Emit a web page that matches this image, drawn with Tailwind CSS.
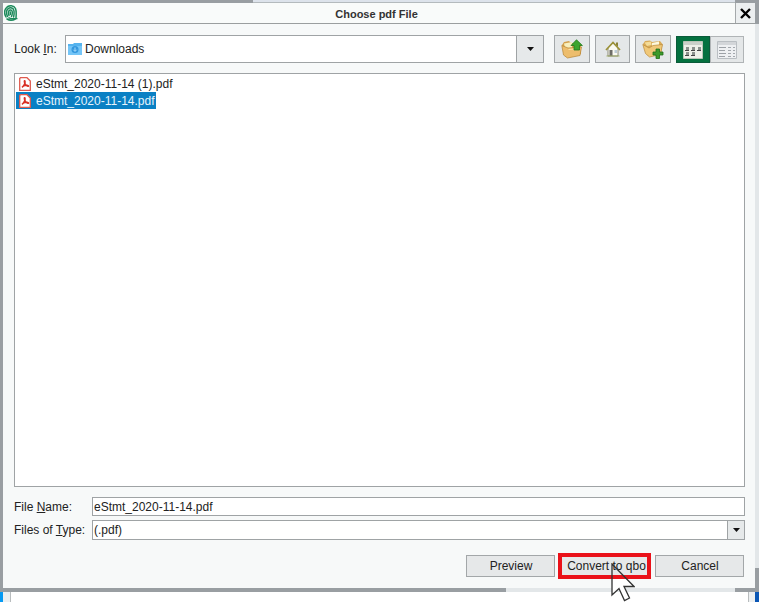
<!DOCTYPE html>
<html lang="en">
<head>
  <meta charset="UTF-8" />
  <meta name="viewport" content="width=device-width, initial-scale=1.0" />
  <title>Choose pdf File</title>
  <script src="https://cdn.jsdelivr.net/npm/@tailwindcss/browser@4"></script>
</head>
<body class="relative flex h-screen flex-col overflow-hidden bg-white font-['Liberation_Sans',Arial,sans-serif] text-xs text-[#222]">

  <!-- Window frame, top edge -->
  <div class="flex h-[3px] shrink-0">
    <div class="w-1/3 bg-[#999ea2]"></div>
    <div class="flex-1 border-b border-[#b4babd] bg-[#dde3eb]"></div>
    <div class="w-6 bg-[#999ea2]"></div>
  </div>

  <div class="flex min-h-0 flex-1">
    <div class="w-[3px] shrink-0 bg-[#999ea2]"></div>

    <div class="flex min-w-0 flex-1 flex-col bg-[#f7f9f9]">
      <!-- Title bar -->
      <header class="flex h-[21px] shrink-0 items-stretch border-b border-[#9a9e9f] bg-[#f9fbfa]">
        <svg class="mt-[2px] ml-px h-4 w-[14px]" viewBox="0 0 14 16" fill="none" stroke="#1c8a5b" stroke-width="1.5" stroke-linecap="round">
          <path d="M2 12C.3 9 .3 5 2.600 2.600C5-.2 10 .2 11.500 3.500C12.500 6 12.300 9 12 12.500" />
          <path d="M3.500 11.500C2 8 2.400 5 4.200 3.600C6.500 2 9.600 3 10 6C10.300 8.500 10 10.500 9.600 12" />
          <path d="M5 10.500C4 8 4.200 5.600 6 5C7.600 4.600 8.400 6 8.300 8C8.200 9.500 8 10.500 7.500 11.500" />
          <path d="M6.300 7V9.500M3 14C5.500 15.600 9 15.300 11.500 14M5 12.800C7 14 9 14 12.800 13.600" />
        </svg>
        <h1 class="flex-1 pt-[3px] text-center text-[11px] leading-4 font-bold text-[#333]">Choose pdf File</h1>
        <button type="button" aria-label="Close" class="flex w-5 items-center justify-center border-l border-[#a5a9ab] bg-[#eceff0]">
          <svg class="h-[11px] w-[11px]" viewBox="0 0 11 11" stroke="#000" stroke-width="2.400"><path d="M1 1L10 10M10 1L1 10" /></svg>
        </button>
      </header>

      <main class="flex min-h-0 flex-1 flex-col pt-[11px] pr-[10px] pb-[9px] pl-[11px]">
        <!-- Look in -->
        <div class="flex shrink-0 items-center pr-px">
          <label for="lookIn" class="w-[51px] shrink-0">Look <u>I</u>n:</label>
          <div class="relative flex-1">
            <select id="lookIn" class="block h-7 w-full appearance-none border border-[#9fa3a5] bg-white pl-[19px] text-xs text-[#222]">
              <option>Downloads</option>
            </select>
            <svg class="pointer-events-none absolute top-2 left-[3px] h-3 w-[14px]" viewBox="0 0 14 12">
              <path d="M0 1H5L6 0H14V12H0Z" fill="#55b3ee" />
              <path d="M0 3H14V12H0Z" fill="#74c5f7" />
              <circle cx="7" cy="6.500" r="3.500" fill="#3397dd" />
              <path d="M7 4.500V8.200M5.300 6.700L7 8.400L8.700 6.700" fill="none" stroke="#a9dcfb" />
            </svg>
            <span class="pointer-events-none absolute top-0 right-0 flex h-7 w-7 items-center justify-center border border-[#9fa3a5] bg-[#e6e9ea]">
              <svg class="h-1 w-[7px]" viewBox="0 0 7 4"><path d="M0 0H7L3.500 4Z" fill="#111" /></svg>
            </span>
          </div>

          <div class="ml-[10px] flex gap-[5px]">
            <button type="button" aria-label="Up one level" class="flex h-7 w-9 items-center justify-center border border-[#a3a7a9] bg-[#e4e7e8]">
              <svg class="h-5 w-[22px]" viewBox="0 0 22 20">
                <path d="M1 6L3 3L8 2L10 4L20 5V15L6 18Z" fill="#d3a04c" />
                <path d="M3 4.500L11 3V9L4 9Z" fill="#f8efbd" />
                <path d="M.8 6.500L7 9L20.500 8L19 16.500L6.500 19L2.500 16Z" fill="#edbd6c" stroke="#b68434" stroke-width=".7" />
                <path d="M7.500 10.500L19 9.500" stroke="#fae3ac" />
                <path d="M15.500 .8L21.400 6.500H18.500V11H13V6.500H10Z" fill="#3ca52e" stroke="#227a1b" stroke-width=".8" />
              </svg>
            </button>
            <button type="button" aria-label="Home" class="flex h-7 w-[35px] items-center justify-center border border-[#a3a7a9] bg-[#e4e7e8]">
              <svg class="h-4 w-4" viewBox="0 0 16 16">
                <path d="M3 7L8 2L13 7V15H3Z" fill="#fafaf2" stroke="#77775f" stroke-width=".8" />
                <path d="M11 1.500H13V6L11 4Z" fill="#8a8239" />
                <path d="M1 9L8 1.500L15 9" fill="none" stroke="#9b9138" stroke-width="1.700" />
                <path d="M4.500 9H7.500V15H4.500Z" fill="#6d6d67" />
                <path d="M9.500 9H12V12H9.500Z" fill="#bccbd5" />
                <path d="M1.500 15H14.500" stroke="#9eaa69" />
              </svg>
            </button>
            <button type="button" aria-label="Create new folder" class="flex h-7 w-9 items-center justify-center border border-[#a3a7a9] bg-[#e4e7e8]">
              <svg class="h-5 w-[22px]" viewBox="0 0 22 20">
                <path d="M1 5L3 2L8 1.500L10 3L18 2L20.500 5L19 15L6 17Z" fill="#d9ab58" />
                <path d="M2.500 3.500L9 2.500L9.500 6L5 7Z" fill="#f4dc98" />
                <path d="M10 4L17 2.500V7H10Z" fill="#fdf8dc" />
                <path d="M.8 5.500L7 9L11 6.500L20.500 5.500L18.500 15.500L7.500 18L3.500 14.500Z" fill="#f0c878" stroke="#b98a3c" stroke-width=".7" />
                <path d="M14 10H17.500V13H21V16H17.500V19.500H14V16H11V13H14Z" fill="#3d9a2c" stroke="#226d18" stroke-width=".8" />
              </svg>
            </button>
            <div class="flex pt-px">
              <button type="button" aria-label="List" aria-pressed="true" class="flex h-[27px] w-[34px] items-center justify-center border border-[#0b5b3a] bg-[#04713f]">
                <svg class="h-[18px] w-5" viewBox="0 0 20 18">
                  <path d="M.5.5H19.500V17.500H.5Z" fill="#eef0e8" stroke="#b9c5b6" />
                  <path d="M1 1H19V4H1Z" fill="#cbd1c9" />
                  <path d="M3 6H6V9H3ZM9 6H12V9H9ZM15 6H18V9H15ZM3 11H6V14H3ZM9 11H12V14H9Z" fill="#8b918c" />
                  <path d="M2 9.500H6M8 9.500H12M14 9.500H18M2 14.500H6M8 14.500H12" stroke="#444" />
                </svg>
              </button>
              <button type="button" aria-label="Details" aria-pressed="false" class="flex h-[27px] w-[34px] items-center justify-center border border-[#b0b4b6] bg-[#e4e7e8]">
                <svg class="h-[18px] w-5" viewBox="0 0 20 18">
                  <path d="M.5.5H19.500V17.500H.5Z" fill="#eef0f2" stroke="#b9bec2" />
                  <path d="M1 1H19V4H1Z" fill="#d3d6d9" />
                  <path d="M2 6.500H9M2 9.500H8M2 12.500H9M2 15.500H8" stroke="#9ca1a6" />
                  <path d="M11 6.500H14M16 6.500H18M11 9.500H14M16 9.500H18M11 12.500H14M16 12.500H18M11 15.500H14M16 15.500H18" stroke="#a3a8ad" />
                </svg>
              </button>
            </div>
          </div>
        </div>

        <!-- Files -->
        <ul role="listbox" aria-label="Files" class="mt-[10px] flex min-h-0 flex-1 flex-col items-start border border-[#9fa3a5] bg-white px-px pt-px">
          <li role="option" aria-selected="false" class="flex h-[17px] items-center gap-[5px] pr-px pl-[3px]">
            <svg class="h-[14px] w-3" viewBox="0 0 12 14">
              <path d="M1.500 .7H8L11.300 4V13.300H.7V1.500Z" fill="#fff" stroke="#df5a4e" stroke-width="1.300" />
              <path d="M3 10.300C5 9 6.500 6 6 4C5.500 3 4.800 4.500 6 6.500C7 8.500 9 9.800 9.500 9C9.500 7.700 5 8.200 3 10.300Z" fill="none" stroke="#d93025" stroke-width="1.500" />
            </svg>
            <span>eStmt_2020-11-14 (1).pdf</span>
          </li>
          <li role="option" aria-selected="true" class="flex h-[17px] items-center gap-[5px] bg-[#0a80c4] pr-px pl-[3px] text-[#e6f4fc]">
            <svg class="h-[14px] w-3" viewBox="0 0 12 14">
              <path d="M1.500 .7H8L11.300 4V13.300H.7V1.500Z" fill="#fff" stroke="#df5a4e" stroke-width="1.300" />
              <path d="M3 10.300C5 9 6.500 6 6 4C5.500 3 4.800 4.500 6 6.500C7 8.500 9 9.800 9.500 9C9.500 7.700 5 8.200 3 10.300Z" fill="none" stroke="#d93025" stroke-width="1.500" />
            </svg>
            <span>eStmt_2020-11-14.pdf</span>
          </li>
        </ul>

        <!-- Name and type -->
        <div class="mt-[10px] flex shrink-0 items-center">
          <label for="fileName" class="w-[78px] shrink-0">File <u>N</u>ame:</label>
          <input id="fileName" type="text" value="eStmt_2020-11-14.pdf" class="h-[19px] min-w-0 flex-1 border border-[#9fa3a5] bg-white px-px text-xs text-[#222]" />
        </div>
        <div class="mt-1 flex shrink-0 items-center">
          <label for="fileType" class="w-[78px] shrink-0">Files of <u>T</u>ype:</label>
          <div class="relative flex-1">
            <select id="fileType" class="block h-5 w-full appearance-none border border-[#9fa3a5] bg-white px-px text-xs text-[#222]">
              <option>(.pdf)</option>
            </select>
            <span class="pointer-events-none absolute top-0 right-0 flex h-5 w-[18px] items-center justify-center border border-[#9fa3a5] bg-[#e6e9ea]">
              <svg class="h-1 w-[7px]" viewBox="0 0 7 4"><path d="M0 0H7L3.500 4Z" fill="#111" /></svg>
            </span>
          </div>
        </div>

        <!-- Actions -->
        <div class="mt-[13px] flex shrink-0 items-center justify-end gap-[3px] pr-px">
          <button type="button" class="h-[22px] w-[89px] border border-[#a3a7a9] bg-[#e6e8e9] pl-px">Preview</button>
          <div class="relative">
            <button type="button" class="block h-[26px] w-[93px] border-4 border-[#ea1119] bg-[#e6e8e9] pl-1 whitespace-nowrap">Convert to qbo</button>
            <!-- Mouse pointer -->
            <svg class="pointer-events-none absolute top-[10px] left-[53px] h-[39px] w-6" viewBox="0 0 24 39">
              <path d="M1 16H15.500L23 23.500H13L18.500 35L13.500 37.500L8 25.500L1 32Z" fill="#fff" />
              <path d="M1 1V32L8 25.500L13.500 37.500L18.500 35L13 23.500H23Z" fill="none" stroke="#333" stroke-width="1.300" />
            </svg>
          </div>
          <button type="button" class="ml-px h-[22px] w-[89px] border border-[#a3a7a9] bg-[#e6e8e9] pl-px">Cancel</button>
        </div>
      </main>
    </div>

    <!-- Window frame, right edge -->
    <div class="flex w-1 shrink-0 flex-col">
      <div class="h-[21px] bg-[#999ea2]"></div>
      <div class="flex-1 bg-[#e3e7e9]"></div>
      <div class="h-5 bg-[#999ea2]"></div>
    </div>
  </div>

  <!-- Window frame, bottom edge -->
  <div class="flex h-1 shrink-0">
    <div class="w-2/3 bg-[#999ea2]"></div>
    <div class="flex-1 bg-[#e3e7e9]"></div>
    <div class="w-6 bg-[#999ea2]"></div>
  </div>

  <!-- Window behind the dialog -->
  <div class="flex h-[10px] shrink-0 justify-between">
    <div class="flex w-[11px] border-r border-[#b8bcbe] bg-[#edf0f1]"><div class="w-[3px] bg-[#069af3]"></div></div>
    <div class="flex w-[11px] justify-end border-l border-[#b8bcbe] bg-[#edf0f1]"><div class="w-1 bg-[#0b57b5]"></div></div>
  </div>
</body>
</html>
